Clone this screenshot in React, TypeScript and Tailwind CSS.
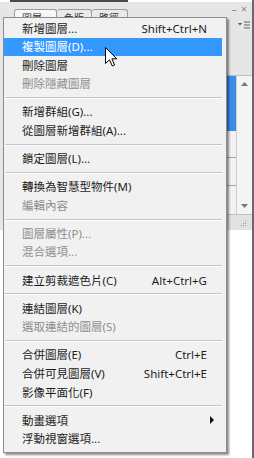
import React from "react";

type Item = { t: string; s?: string; d?: boolean; hl?: boolean; sub?: boolean };

const groups: Item[][] = [
  [
    { t: "新增圖層...", s: "Shift+Ctrl+N" },
    { t: "複製圖層(D)...", hl: true },
    { t: "刪除圖層" },
    { t: "刪除隱藏圖層", d: true },
  ],
  [{ t: "新增群組(G)..." }, { t: "從圖層新增群組(A)..." }],
  [{ t: "鎖定圖層(L)..." }],
  [{ t: "轉換為智慧型物件(M)" }, { t: "編輯內容", d: true }],
  [
    { t: "圖層屬性(P)...", d: true },
    { t: "混合選項...", d: true },
  ],
  [{ t: "建立剪裁遮色片(C)", s: "Alt+Ctrl+G" }],
  [{ t: "連結圖層(K)" }, { t: "選取連結的圖層(S)", d: true }],
  [
    { t: "合併圖層(E)", s: "Ctrl+E" },
    { t: "合併可見圖層(V)", s: "Shift+Ctrl+E" },
    { t: "影像平面化(F)" },
  ],
  [{ t: "動畫選項", sub: true }, { t: "浮動視窗選項..." }],
];

function Row({ it }: { it: Item }) {
  const color = it.hl ? "text-white" : it.d ? "text-[#8e8e8e]" : "text-[#1c1c1c]";
  return (
    <div
      className={`flex items-center h-[18.6px] pl-[18px] pr-[15px] ${
        it.hl ? "bg-[#3399ff]" : ""
      } ${color}`}
    >
      <span className="flex-1 whitespace-nowrap">{it.t}</span>
      {it.s && <span className="whitespace-nowrap">{it.s}</span>}
      {it.sub && (
        <svg width="5" height="8" viewBox="0 0 5 8" className="mr-[-8px]">
          <path d="M0 0 L4 4 L0 8 Z" fill="#111" />
        </svg>
      )}
    </div>
  );
}

function Sep() {
  return (
    <div className="h-[9.5px] flex flex-col justify-center pl-[1px]">
      <div className="h-px bg-[#c4c4c4]" />
      <div className="h-px bg-white" />
    </div>
  );
}

function Tab({ label, w, first }: { label: string; w: string; first?: boolean }) {
  return (
    <div
      className={`${w} h-[8px] overflow-hidden border border-[#9c9c9c] border-b-0 rounded-t-[3px] pl-[7px] pt-[2px] text-[10px] leading-[12px] text-[#333] ${
        first ? "bg-[#f7f7f7]" : "border-l-0 bg-[#eaeaea]"
      }`}
    >
      {label}
    </div>
  );
}

export default function App() {
  return (
    <div className="relative w-[254px] h-[458px] bg-white overflow-hidden font-['Noto_Sans','Noto_Sans_CJK_TC',sans-serif] text-[11.5px] leading-none">
      {/* background panel */}
      <div className="flex flex-col h-full border-r-2 border-[#6a6a6a]">
        <div className="h-[2px] ml-[10px] w-[118px] bg-[#4a4a4a]" />
        <div className="h-[228px] bg-[#e6e6e6] flex flex-col">
          <div className="flex h-[15px] items-end pl-[14px] relative">
            <div className="flex items-end">
              <Tab label="圖層 ..." w="w-[43px]" first />
              <Tab label="色版" w="w-[35px]" />
              <Tab label="路徑" w="w-[36px]" />
            </div>
            <div className="absolute right-[5px] top-[1px] flex items-center gap-[4px] text-[#8a8a8a] text-[11px]">
              <span>–</span>
              <span>×</span>
            </div>
          </div>
          <div className="flex flex-1">
            <div className="flex-1" />
            <div className="w-[25px] flex flex-col">
              <div className="h-[15px] flex justify-end items-center pr-[2px]">
                <svg width="12" height="8" viewBox="0 0 12 8">
                  <path d="M0 2 L4 2 L2 4.5 Z" fill="#555" />
                  <rect x="6" y="0.5" width="6" height="1" fill="#666" />
                  <rect x="6" y="3.5" width="6" height="1" fill="#666" />
                  <rect x="6" y="6.5" width="6" height="1" fill="#666" />
                </svg>
              </div>
              <div className="flex flex-1 border-t border-[#bdbdbd] mt-[43px]">
                <div className="w-[9px] flex flex-col bg-[#f2f2f2]">
                  <div className="h-[55px] bg-[#3a8ee8]" />
                  <div className="h-[27px] border-b border-[#a8a8a8]" />
                  <div className="h-[28px] border-b border-[#a8a8a8]" />
                </div>
                <div className="flex-1 flex flex-col justify-between items-center bg-[#f4f4f4] border-l border-[#d0d0d0] py-[6px]">
                  <svg width="7" height="4" viewBox="0 0 7 4">
                    <path d="M0 4 L3.5 0 L7 4 Z" fill="#777" />
                  </svg>
                  <svg width="7" height="4" viewBox="0 0 7 4">
                    <path d="M0 0 L3.5 4 L7 0 Z" fill="#777" />
                  </svg>
                </div>
              </div>
              <div className="h-[16px] bg-[#e2e2e2] border-t border-[#c0c0c0] flex justify-end items-end pr-[5px] pb-[3px]">
                <svg width="7" height="7" viewBox="0 0 7 7">
                  <rect x="5" y="1" width="1" height="1" fill="#999" />
                  <rect x="3" y="3" width="1" height="1" fill="#999" />
                  <rect x="5" y="3" width="1" height="1" fill="#999" />
                  <rect x="1" y="5" width="1" height="1" fill="#999" />
                  <rect x="3" y="5" width="1" height="1" fill="#999" />
                  <rect x="5" y="5" width="1" height="1" fill="#999" />
                </svg>
              </div>
            </div>
          </div>
        </div>
        <div className="flex-1 bg-white" />
      </div>

      {/* context menu */}
      <div className="absolute left-[3px] top-[17px] w-[224px] h-[436px] border border-[#8c8c8c] bg-[#f1f1f1] pt-[1px] pr-[4px] shadow-[2px_2px_2px_rgba(0,0,0,0.45)]">
        {groups.map((g, gi) => (
          <React.Fragment key={gi}>
            {gi > 0 && <Sep />}
            {g.map((it, ii) => (
              <Row key={ii} it={it} />
            ))}
          </React.Fragment>
        ))}
      </div>

      {/* mouse cursor */}
      <svg
        className="absolute left-[105px] top-[47px]"
        width="13"
        height="20"
        viewBox="0 0 13 20"
      >
        <path
          d="M0.5 0.5 L0.5 16.5 L4.5 12.8 L7.3 19 L9.6 18 L6.9 11.8 L11.8 11.8 Z"
          fill="white"
          stroke="black"
          strokeWidth="1"
          strokeLinejoin="miter"
        />
      </svg>
    </div>
  );
}
